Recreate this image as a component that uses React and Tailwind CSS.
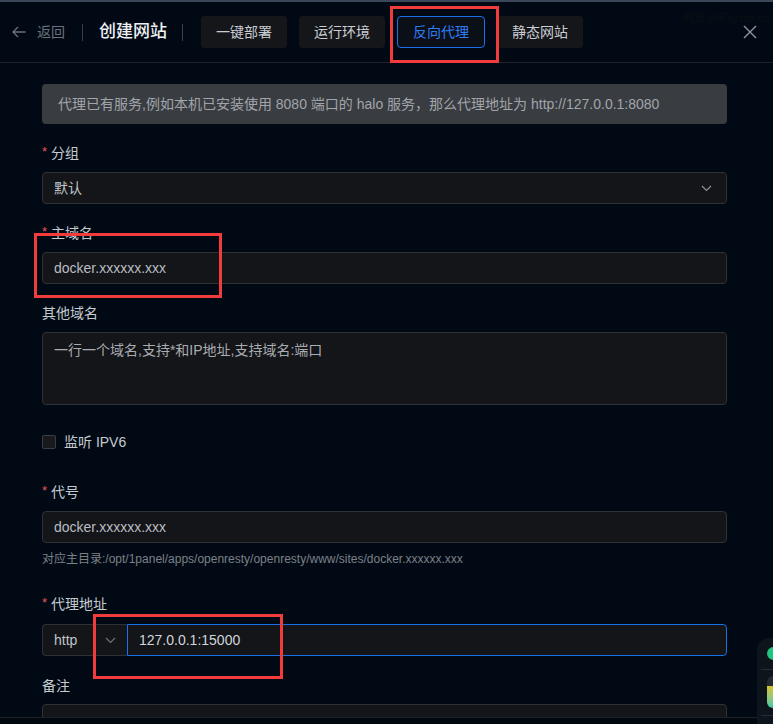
import React from "react";

const FONT = { fontFamily: '"Liberation Sans", "Noto Sans CJK SC", sans-serif' };

function Chevron({ color = "#8d9199", w = 11 }) {
  return (
    <svg width={w} height={7} viewBox="0 0 11 7" fill="none">
      <path d="M1 1 L5.5 5.5 L10 1" stroke={color} strokeWidth="1.2" />
    </svg>
  );
}

function Label({ text, req }) {
  return (
    <div className="h-[22px] leading-[22px] text-[14px] text-[#c6cad1] flex items-center">
      {req && <span className="text-[#e0585b] mr-[4px] text-[13px] relative top-[-1px]">*</span>}
      <span>{text}</span>
    </div>
  );
}

function Input({ value, className = "" }) {
  return (
    <div
      className={`h-[32px] w-full rounded-[4px] border border-[#2e3135] bg-[#131518] flex items-center px-[11px] text-[14px] text-[#b9bdc3] ${className}`}
    >
      {value}
    </div>
  );
}

const tabs = ["一键部署", "运行环境", "反向代理", "静态网站"];

export default function App() {
  return (
    <div className="relative w-[773px] h-[724px] overflow-hidden bg-[#010a14] flex flex-col" style={FONT}>
      <div className="h-[2px] bg-[#3c4759] shrink-0" />
      {/* header */}
      <div className="h-[61px] shrink-0 border-b border-[#1d2127] flex items-center pl-[12px] pr-[16px] relative">
        <svg width="14" height="12" viewBox="0 0 14 12" fill="none" className="mr-[11px]">
          <path d="M6 1 L1 6 L6 11 M1 6 H13.5" stroke="#6b717b" strokeWidth="1.3" />
        </svg>
        <span className="text-[14px] text-[#6b717b]">返回</span>
        <div className="w-px h-[17px] bg-[#3a3f46] ml-[17px] mr-[16px]" />
        <span className="text-[17px] text-[#eef0f3] font-medium">创建网站</span>
        <div className="w-px h-[17px] bg-[#3a3f46] ml-[15px] mr-[18px]" />
        <div className="flex items-center gap-[12px]">
          {tabs.map((t, i) =>
            i === 2 ? (
              <div
                key={t}
                className="h-[32px] w-[88px] rounded-[4px] border border-[#1b6fe8] bg-[#0b1018] text-[#2f7cf4] text-[14px] flex items-center justify-center"
              >
                {t}
              </div>
            ) : (
              <div
                key={t}
                className="h-[32px] w-[86px] rounded-[4px] bg-[#141619] text-[#c9ccd2] text-[14px] flex items-center justify-center"
              >
                {t}
              </div>
            )
          )}
        </div>
        <div className="ml-auto">
          <svg width="14" height="14" viewBox="0 0 14 14" fill="none">
            <path d="M1 1 L13 13 M13 1 L1 13" stroke="#8f959e" strokeWidth="1.4" />
          </svg>
        </div>
        <div className="absolute left-[683px] top-[8px] text-[11px] text-[#0b0e12] whitespace-nowrap">网友小宋xyzbz.cn</div>
      </div>

      {/* content */}
      <div className="flex-1 overflow-hidden pl-[42px] pr-[46px] pt-[21px]">
        <div className="h-[40px] rounded-[4px] bg-[#393c40] flex items-center px-[16px] text-[14px] text-[#a1a5ab] whitespace-nowrap">
          代理已有服务,例如本机已安装使用 8080 端口的 halo 服务，那么代理地址为 http://127.0.0.1:8080
        </div>

        <div className="mt-[18px]">
          <Label text="分组" req />
          <div className="mt-[8px] h-[32px] w-full rounded-[4px] border border-[#2e3135] bg-[#131518] flex items-center pl-[11px] pr-[14px] text-[14px] text-[#c0c4ca]">
            <span className="flex-1">默认</span>
            <Chevron />
          </div>
        </div>

        <div className="mt-[18px]">
          <Label text="主域名" req />
          <div className="mt-[8px]">
            <Input value="docker.xxxxxx.xxx" />
          </div>
        </div>

        <div className="mt-[18px]">
          <Label text="其他域名" />
          <div className="mt-[8px] h-[73px] w-full rounded-[4px] border border-[#2e3135] bg-[#131518] px-[11px] pt-[6px] text-[14px] text-[#a9acb2] leading-[22px]">
            一行一个域名,支持*和IP地址,支持域名:端口
          </div>
        </div>

        <div className="mt-[21px] h-[32px] flex items-center">
          <div className="w-[14px] h-[14px] rounded-[2px] border border-[#3a3d42] bg-[#17191c]" />
          <span className="ml-[8px] text-[14px] text-[#c6cad1]">监听 IPV6</span>
        </div>

        <div className="mt-[23px]">
          <Label text="代号" req />
          <div className="mt-[8px]">
            <Input value="docker.xxxxxx.xxx" />
          </div>
          <div className="mt-[8px] h-[16px] leading-[16px] text-[12px] text-[#7c8088] whitespace-nowrap">
            对应主目录:/opt/1panel/apps/openresty/openresty/www/sites/docker.xxxxxx.xxx
          </div>
        </div>

        <div className="mt-[26px]">
          <Label text="代理地址" req />
          <div className="mt-[9px] h-[32px] flex">
            <div className="w-[85px] h-full rounded-l-[4px] border border-r-0 border-[#2e3135] bg-[#131518] flex items-center pl-[11px] text-[14px] text-[#c0c4ca]">
              <span className="w-[51px]">http</span>
              <Chevron color="#6d727a" w={11} />
            </div>
            <div className="flex-1 h-full rounded-r-[4px] border border-[#1b6fe8] bg-[#131518] flex items-center pl-[11px] text-[14px] text-[#d2d5da]">
              127.0.0.1:15000
            </div>
          </div>
        </div>

        <div className="mt-[19px]">
          <Label text="备注" />
          <div className="mt-[7px]">
            <Input value="" />
          </div>
        </div>
      </div>
      <div className="h-[7px] shrink-0 border-t border-[#1d2127] bg-[#020810]" />

      {/* annotation boxes */}
      <div className="absolute left-[390px] top-[6px] w-[109px] h-[57px] border-[3px] border-[#f23c3c]" />
      <div className="absolute left-[34px] top-[233px] w-[188px] h-[65px] border-[3px] border-[#f23c3c]" />
      <div className="absolute left-[93px] top-[614px] w-[190px] h-[65px] border-[3px] border-[#f23c3c]" />

      {/* floating widget */}
      <div className="absolute left-[757px] top-[638px] w-[40px] h-[90px] rounded-tl-[12px] bg-[#0e141b]">
        <div className="absolute left-[10px] top-[9px] w-[13px] h-[13px] rounded-full bg-[#1fc77e]" />
        <div className="absolute left-[4px] top-[31px] w-[40px] h-px bg-[#262c34]" />
        <div className="absolute left-[10px] top-[38px] w-[20px] h-[32px] rounded-[6px] overflow-hidden bg-[#242a33]">
          <div className="absolute left-0 top-[10px] w-full h-[22px] bg-gradient-to-b from-[#d6c325] to-[#27c9a3]" />
        </div>
        <div className="absolute left-[4px] top-[77px] w-[40px] h-px bg-[#262c34]" />
      </div>
    </div>
  );
}
